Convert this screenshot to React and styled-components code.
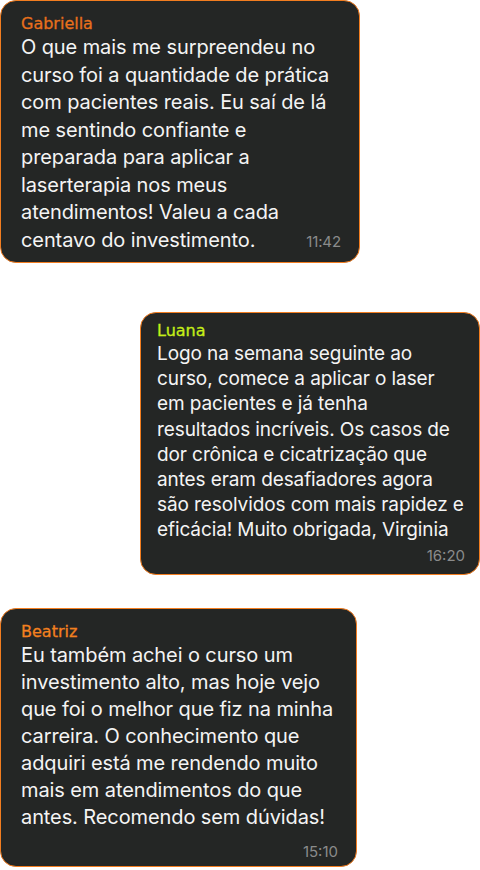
import React from 'react';
import styled, { createGlobalStyle } from 'styled-components';

const GlobalStyle = createGlobalStyle`
  html, body {
    margin: 0;
    padding: 0;
    background: #ffffff;
  }
  * {
    box-sizing: border-box;
  }
`;

const messages = [
  {
    name: 'Gabriella',
    color: '#e8701c',
    text: 'O que mais me surpreendeu no curso foi a quantidade de prática com pacientes reais. Eu saí de lá me sentindo confiante e preparada para aplicar a laserterapia nos meus atendimentos! Valeu a cada centavo do investimento.',
    time: '11:42',
    width: 360,
    side: 'left',
    size: 20,
    line: 27.5,
    pad: '12px 18px 8px 20px',
    inlineTime: true,
  },
  {
    name: 'Luana',
    color: '#c4ee18',
    text: 'Logo na semana seguinte ao curso, comece a aplicar o laser em pacientes e já tenha resultados incríveis. Os casos de dor crônica e cicatrização que antes eram desafiadores agora são resolvidos com mais rapidez e eficácia! Muito obrigada, Virginia',
    time: '16:20',
    width: 340,
    side: 'right',
    size: 19,
    line: 25.2,
    pad: '7px 14px 8px 16px',
    gap: 49,
    timeGap: 3,
  },
  {
    name: 'Beatriz',
    color: '#f3801f',
    text: 'Eu também achei o curso um investimento alto, mas hoje vejo que foi o melhor que fiz na minha carreira. O conhecimento que adquiri está me rendendo muito mais em atendimentos do que antes. Recomendo sem dúvidas!',
    time: '15:10',
    width: 357,
    side: 'left',
    size: 20,
    line: 27,
    pad: '12px 18px 4px 20px',
    gap: 33,
    timeGap: 11,
  },
];

const App = () => {
  return (
    <>
      <GlobalStyle />
      <Chat>
        {messages.map((m) => (
          <Bubble key={m.name} $width={m.width} $side={m.side} $pad={m.pad} $gap={m.gap || 0}>
            <Name $color={m.color}>{m.name}</Name>
            <Body $size={m.size} $line={m.line}>
              {m.text}
              {m.inlineTime && <Time $inline>{m.time}</Time>}
            </Body>
            {!m.inlineTime && <Time $gap={m.timeGap}>{m.time}</Time>}
          </Bubble>
        ))}
      </Chat>
    </>
  );
};

const Chat = styled.div`
  display: flex;
  flex-direction: column;
  width: 480px;
  font-family: Inter, 'Liberation Sans', sans-serif;
`;

const Bubble = styled.div`
  width: ${(p) => p.$width}px;
  margin-top: ${(p) => p.$gap}px;
  align-self: ${(p) => (p.$side === 'right' ? 'flex-end' : 'flex-start')};
  display: flex;
  flex-direction: column;
  padding: ${(p) => p.$pad};
  background: #242625;
  border: 1.5px solid #f27d20;
  border-radius: 16px;
  color: #f4f4f4;
`;

const Name = styled.div`
  font-family: 'DejaVu Sans', sans-serif;
  font-size: 16px;
  line-height: 21px;
  color: ${(p) => p.$color};
  -webkit-text-stroke: 0.3px ${(p) => p.$color};
`;

const Body = styled.div`
  font-size: ${(p) => p.$size}px;
  line-height: ${(p) => p.$line}px;
  font-weight: 400;
  letter-spacing: -0.1px;
`;

const Time = styled.span`
  font-size: 15px;
  color: #8a8b8b;
  text-align: right;
  line-height: ${(p) => (p.$inline ? '22px' : '20px')};
  ${(p) =>
    p.$inline
      ? `
    float: right;
    margin-top: 4px;
    margin-left: 12px;
  `
      : `
    align-self: flex-end;
    margin-top: ${p.$gap}px;
  `}
`;

export default App;
